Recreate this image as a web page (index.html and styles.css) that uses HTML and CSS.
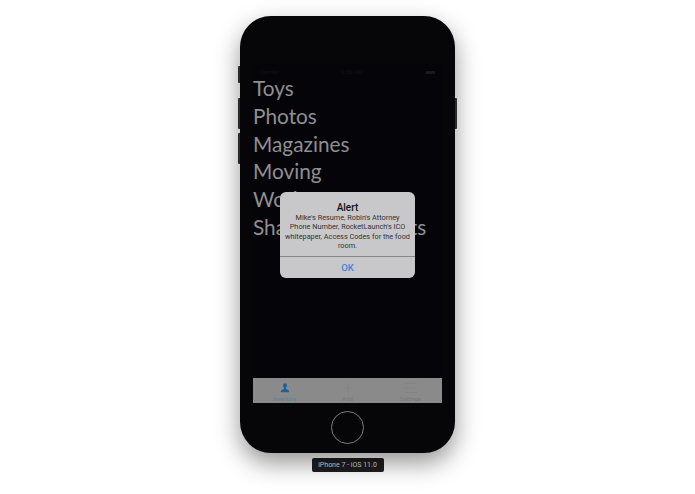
FILE: index.html
```html
<!DOCTYPE html>
<html lang="en">
<head>
<meta charset="utf-8">
<title>iPhone 7 - iOS 11.0</title>
<link rel="stylesheet" href="styles.css">
</head>
<body>
<main class="stage">
  <div class="phone">
    <span class="hw hw-mute"></span>
    <span class="hw hw-up"></span>
    <span class="hw hw-down"></span>
    <span class="hw hw-power"></span>
    <div class="screen">
      <div class="status">
        <span>Carrier</span>
        <span>9:30 AM</span>
        <span class="battery"></span>
      </div>
      <ul class="list">
        <li>Toys</li>
        <li>Photos</li>
        <li>Magazines</li>
        <li>Moving</li>
        <li>Work</li>
        <li>Shared Documents</li>
      </ul>
      <nav class="tabs">
        <div class="tab tab-active">
          <svg class="tab-icon" viewBox="-2 -1 18 14" aria-hidden="true"><path d="M7 0C5.4 0 4.6 1.2 4.6 2.8 4.6 4.2 5.3 5.2 5.8 5.7V7L2 9.2 1.6 11.4H12.4L12 9.2 8.2 7V5.7C8.7 5.2 9.4 4.2 9.4 2.8 9.4 1.2 8.6 0 7 0Z"/></svg>
          <span>Inventory</span>
        </div>
        <div class="tab">
          <svg class="tab-icon" viewBox="0 0 14 12" aria-hidden="true"><path class="line" d="M7 1V11M2 6H12"/></svg>
          <span>Add</span>
        </div>
        <div class="tab">
          <svg class="tab-icon" viewBox="0 0 14 12" aria-hidden="true"><path class="line" d="M1 1.5H13M1 6H13M1 10.5H13"/></svg>
          <span>Settings</span>
        </div>
      </nav>
    </div>
    <div class="home"></div>
    <div class="alert" role="alertdialog">
      <div class="alert-body">
        <h1>Alert</h1>
        <p>Mike's Resume, Robin's Attorney<br>Phone Number, RocketLaunch's ICO<br>whitepaper, Access Codes for the food<br>room.</p>
      </div>
      <div class="alert-action">OK</div>
    </div>
  </div>
  <div class="device-label">iPhone 7 - iOS 11.0</div>
</main>
</body>
</html>
```
FILE: styles.css
```css
html, body {
  margin: 0;
  padding: 0;
  height: 100%;
  background: #fff;
  overflow: hidden;
}
body {
  font-family: Roboto, "Liberation Sans", Arial, sans-serif;
}
.stage {
  display: flex;
  flex-direction: column;
  align-items: center;
  padding-top: 16px;
  filter: blur(0.35px);
}
.phone {
  position: relative;
  width: 215px;
  height: 437px;
  box-sizing: border-box;
  padding: 48px 13px 0;
  background: #060608;
  border-radius: 31px;
  box-shadow: 0 10px 24px rgba(0, 0, 0, 0.42);
  display: flex;
  flex-direction: column;
  align-items: center;
}
.hw {
  position: absolute;
  width: 2px;
  background: #2a2a2c;
}
.hw-mute { left: -2px; top: 50px; height: 17px; border-radius: 1px 0 0 1px; }
.hw-up { left: -2px; top: 82px; height: 31px; border-radius: 1px 0 0 1px; }
.hw-down { left: -2px; top: 117px; height: 31px; border-radius: 1px 0 0 1px; }
.hw-power { right: -2px; top: 82px; height: 31px; border-radius: 0 1px 1px 0; }
.screen {
  width: 189px;
  height: 339px;
  background: #050509;
  display: flex;
  flex-direction: column;
}
.status {
  height: 10px;
  box-sizing: border-box;
  padding: 4px 7px 0;
  display: flex;
  justify-content: space-between;
  font-size: 6px;
  line-height: 8px;
  color: #111113;
}
.battery {
  width: 9px;
  height: 3px;
  margin-top: 3px;
  background: #1a1a1c;
}
.list {
  list-style: none;
  margin: 0;
  padding: 0;
  flex: 1;
  font-family: Lato, "Open Sans", sans-serif;
  font-size: 20.8px;
  font-weight: 400;
  line-height: 27.8px;
  color: #8f8f91;
  white-space: nowrap;
}
.tabs {
  height: 25px;
  background: #8a8a8a;
  display: grid;
  grid-template-columns: repeat(3, 1fr);
}
.tab {
  display: flex;
  flex-direction: column;
  align-items: center;
  padding-top: 4px;
  font-size: 5.8px;
  line-height: 7px;
  color: #777;
}
.tab-icon {
  width: 14px;
  height: 12px;
  margin-bottom: 2px;
  fill: #777;
}
.line {
  fill: none;
  stroke: #7d7d7d;
  stroke-width: 0.6;
}
.tab-active { color: #5a7ca3; }
.tab-active .tab-icon { fill: #1f5f96; }
.home {
  width: 31px;
  height: 31px;
  margin-top: 8px;
  border: 1px solid #7f7f7f;
  border-radius: 50%;
}
.alert {
  position: absolute;
  left: 40px;
  top: 176px;
  width: 135px;
  height: 86px;
  background: #c8c8ca;
  border-radius: 6px;
  display: flex;
  flex-direction: column;
  color: #2c2c2e;
  text-align: center;
}
.alert-body {
  flex: 1;
  padding: 10px 4px 0;
}
.alert-body h1 {
  margin: 0;
  font-size: 10px;
  line-height: 11px;
  font-weight: 500;
  color: #111;
}
.alert-body p {
  margin: 0;
  font-size: 7.3px;
  line-height: 9.3px;
  color: #333;
}
.alert-action {
  height: 21px;
  border-top: 1px solid #88888a;
  font-size: 9.5px;
  font-weight: 500;
  line-height: 21px;
  color: #3f84d8;
}
.device-label {
  margin-top: 5px;
  width: 72px;
  height: 14px;
  background: #1e1e20;
  border-radius: 2px;
  color: #dcdcdc;
  font-size: 7px;
  line-height: 14px;
  text-align: center;
}
```
